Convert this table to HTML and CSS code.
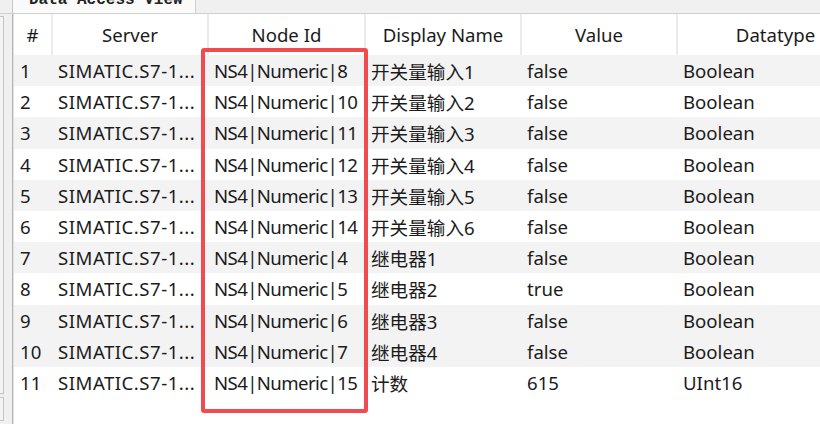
FILE: index.html
```html
<!DOCTYPE html>
<html>
<head>
<meta charset="utf-8">
<link rel="stylesheet" href="styles.css">
</head>
<body>
<div class="window">
  <div class="tabbar">
    <div class="tab-gutter"></div>
    <div class="tab"><span class="tab-label">Data Access View</span></div>
    <div class="tab-rest"></div>
  </div>
  <div class="main">
    <div class="side">
      <div class="side-box"></div>
      <div class="side-box short"></div>
    </div>
    <div class="panel">
      <table class="grid">
        <colgroup>
          <col class="c-num"><col class="c-server"><col class="c-node"><col class="c-name"><col class="c-value"><col class="c-type">
        </colgroup>
        <thead>
          <tr><th>#</th><th>Server</th><th>Node Id</th><th>Display Name</th><th>Value</th><th>Datatype</th></tr>
        </thead>
        <tbody>
          <tr class="alt"><td>1</td><td class="srv">SIMATIC.S7-1...</td><td class="node">NS4|Numeric|8</td><td>开关量输入1</td><td>false</td><td>Boolean</td></tr>
          <tr><td>2</td><td class="srv">SIMATIC.S7-1...</td><td class="node">NS4|Numeric|10</td><td>开关量输入2</td><td>false</td><td>Boolean</td></tr>
          <tr class="alt"><td>3</td><td class="srv">SIMATIC.S7-1...</td><td class="node">NS4|Numeric|11</td><td>开关量输入3</td><td>false</td><td>Boolean</td></tr>
          <tr><td>4</td><td class="srv">SIMATIC.S7-1...</td><td class="node">NS4|Numeric|12</td><td>开关量输入4</td><td>false</td><td>Boolean</td></tr>
          <tr class="alt"><td>5</td><td class="srv">SIMATIC.S7-1...</td><td class="node">NS4|Numeric|13</td><td>开关量输入5</td><td>false</td><td>Boolean</td></tr>
          <tr><td>6</td><td class="srv">SIMATIC.S7-1...</td><td class="node">NS4|Numeric|14</td><td>开关量输入6</td><td>false</td><td>Boolean</td></tr>
          <tr class="alt"><td>7</td><td class="srv">SIMATIC.S7-1...</td><td class="node">NS4|Numeric|4</td><td>继电器1</td><td>false</td><td>Boolean</td></tr>
          <tr><td>8</td><td class="srv">SIMATIC.S7-1...</td><td class="node">NS4|Numeric|5</td><td>继电器2</td><td>true</td><td>Boolean</td></tr>
          <tr class="alt"><td>9</td><td class="srv">SIMATIC.S7-1...</td><td class="node">NS4|Numeric|6</td><td>继电器3</td><td>false</td><td>Boolean</td></tr>
          <tr class="alt"><td>10</td><td class="srv">SIMATIC.S7-1...</td><td class="node">NS4|Numeric|7</td><td>继电器4</td><td>false</td><td>Boolean</td></tr>
          <tr><td>11</td><td class="srv">SIMATIC.S7-1...</td><td class="node">NS4|Numeric|15</td><td>计数</td><td>615</td><td>UInt16</td></tr>
        </tbody>
      </table>
      <div class="highlight"></div>
    </div>
  </div>
</div>
</body>
</html>
```
FILE: styles.css
```css
* { box-sizing: border-box; }
html, body { margin: 0; padding: 0; }
body {
  width: 820px;
  height: 424px;
  overflow: hidden;
  background: #ffffff;
  font-family: "Noto Sans", "Noto Sans CJK SC", sans-serif;
  color: #1b1b1b;
}
.window {
  width: 820px;
  height: 424px;
  display: flex;
  flex-direction: column;
}
.tabbar {
  height: 14px;
  display: flex;
  background: #f0f0f0;
  border-bottom: 1px solid #cfcfcf;
  flex: none;
}
.tab-gutter {
  width: 13px;
  border-right: 1px solid #c8c8c8;
  background: #f0f0f0;
}
.tab {
  width: 183px;
  background: #fafafa;
  border-right: 1px solid #cfcfcf;
  overflow: hidden;
}
.tab-label {
  display: block;
  margin-top: -10px;
  padding-left: 16px;
  font-family: "Liberation Mono", monospace;
  font-weight: bold;
  font-size: 16px;
  line-height: 20px;
  color: #222;
  white-space: nowrap;
}
.tab-rest { flex: 1; background: #f0f0f0; }
.main {
  flex: 1;
  display: flex;
  min-height: 0;
}
.side {
  width: 13px;
  flex: none;
  background: #f0f0f0;
  border-right: 1px solid #b4b4b4;
  display: flex;
  flex-direction: column;
  gap: 3px;
  padding-top: 2px;
}
.side-box {
  width: 4px;
  height: 378px;
  border: 1px solid #c4c4c4;
  border-left: none;
  background: #f4f4f4;
}
.side-box.short { height: 24px; }
.panel {
  flex: 1;
  position: relative;
  overflow: hidden;
  background: #ffffff;
  border-left: 1px solid #e2e2e2;
}
.grid {
  border-collapse: collapse;
  table-layout: fixed;
  width: 860px;
  font-size: 18.6px;
}
.c-num { width: 38px; }
.c-server { width: 156px; }
.c-node { width: 157px; }
.c-name { width: 156px; }
.c-value { width: 156px; }
.c-type { width: 197px; }
.grid th {
  height: 41px;
  font-weight: normal;
  text-align: center;
  border-right: 2px solid #ebebeb;
  background: #ffffff;
  padding: 0;
  white-space: nowrap;
}
.grid td {
  height: 31.2px;
  padding: 0 0 0 6px;
  white-space: nowrap;
  overflow: hidden;
}
.grid td.srv { letter-spacing: 0.5px; }
.grid td.node { letter-spacing: -0.6px; }
.grid tr.alt td { background: #f3f3f3; }
.highlight {
  position: absolute;
  left: 187px;
  top: 34px;
  width: 167px;
  height: 365px;
  border: 4px solid #f04b4e;
  border-radius: 3px;
  pointer-events: none;
}
```
